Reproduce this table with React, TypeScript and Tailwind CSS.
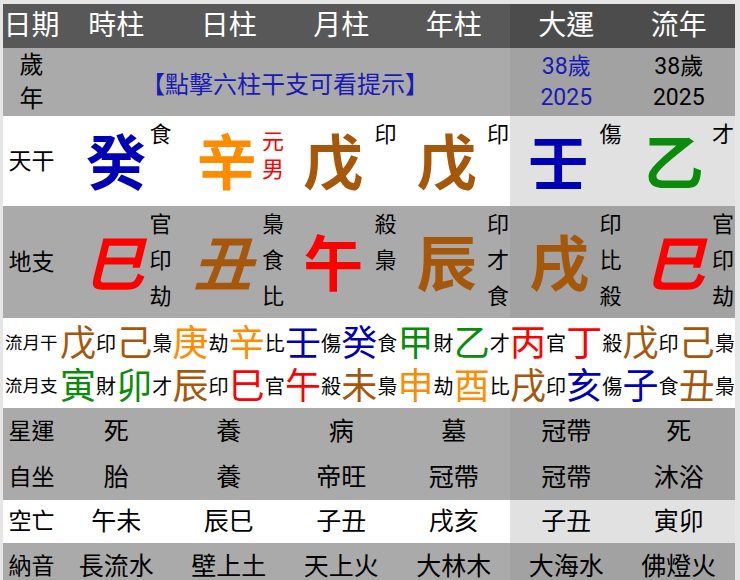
import React from "react";

const FONT = { fontFamily: 'Roboto, "Noto Sans CJK TC", "Noto Sans CJK SC", sans-serif' };

const BLUE = "text-[#0000b4]";
const ORANGE = "text-[#ff8c00]";
const BROWN = "text-[#a5580c]";
const RED = "text-[#ff0000]";
const GREEN = "text-[#0a8c0a]";

const GRID = "grid grid-cols-[57px_repeat(6,112.5px)]";

function Cell({ right, bgL, bgR, className = "", children }: { right?: boolean; bgL: string; bgR: string; className?: string; children?: React.ReactNode }) {
  return <div className={`${right ? bgR : bgL} ${className}`}>{children}</div>;
}

const stems = [
  { ch: "癸", c: BLUE, label: ["食"], s: "translate-x-0" },
  { ch: "辛", c: ORANGE, label: ["元", "男"], red: true, s: "-translate-x-[2px]" },
  { ch: "戊", c: BROWN, label: ["印"], s: "-translate-x-[8px]" },
  { ch: "戊", c: BROWN, label: ["印"], s: "-translate-x-[7px]" },
  { ch: "壬", c: BLUE, label: ["傷"], s: "-translate-x-[8px]" },
  { ch: "乙", c: GREEN, label: ["才"], s: "-translate-x-[5px]" },
];

const branches = [
  { ch: "巳", c: RED, label: ["官", "印", "劫"], s: "-translate-x-[2px] italic" },
  { ch: "丑", c: BROWN, label: ["梟", "食", "比"], s: "-translate-x-[6px] italic" },
  { ch: "午", c: RED, label: ["殺", "梟"], s: "-translate-x-[8px]" },
  { ch: "辰", c: BROWN, label: ["印", "才", "食"], s: "-translate-x-[7px]" },
  { ch: "戌", c: BROWN, label: ["印", "比", "殺"], s: "-translate-x-[7px]" },
  { ch: "巳", c: RED, label: ["官", "印", "劫"], s: "-translate-x-[4px] italic" },
];

const monthStems: [string, string, string][] = [
  ["戊", BROWN, "印"], ["己", BROWN, "梟"], ["庚", ORANGE, "劫"], ["辛", ORANGE, "比"],
  ["壬", BLUE, "傷"], ["癸", BLUE, "食"], ["甲", GREEN, "財"], ["乙", GREEN, "才"],
  ["丙", RED, "官"], ["丁", RED, "殺"], ["戊", BROWN, "印"], ["己", BROWN, "梟"],
];
const monthBranches: [string, string, string][] = [
  ["寅", GREEN, "財"], ["卯", GREEN, "才"], ["辰", BROWN, "印"], ["巳", RED, "官"],
  ["午", RED, "殺"], ["未", BROWN, "梟"], ["申", ORANGE, "劫"], ["酉", ORANGE, "比"],
  ["戌", BROWN, "印"], ["亥", BLUE, "傷"], ["子", BLUE, "食"], ["丑", BROWN, "梟"],
];

const lower = [
  { label: "星運", vals: ["死", "養", "病", "墓", "冠帶", "死"], bgL: "bg-[#aaaaaa]", bgR: "bg-[#a2a2a2]", h: "h-[47px]" },
  { label: "自坐", vals: ["胎", "養", "帝旺", "冠帶", "冠帶", "沐浴"], bgL: "bg-[#aaaaaa]", bgR: "bg-[#a2a2a2]", h: "h-[45px]" },
  { label: "空亡", vals: ["午未", "辰巳", "子丑", "戌亥", "子丑", "寅卯"], bgL: "bg-white", bgR: "bg-[#e1e1e1]", h: "h-[43px]" },
  { label: "納音", vals: ["長流水", "壁上土", "天上火", "大林木", "大海水", "佛燈火"], bgL: "bg-[#aaaaaa]", bgR: "bg-[#a2a2a2]", h: "h-[46px]" },
];

function MonthRow({ label, items }: { label: string; items: [string, string, string][] }) {
  return (
    <div className="grid grid-cols-[57px_repeat(12,56.25px)] h-[43px] items-center">
      <div className="text-[17.5px] leading-none pl-[2px] text-black whitespace-nowrap">{label}</div>
      {items.map(([ch, c, l], i) => (
        <div key={i} className="flex items-center">
          <span className={`text-[36px] leading-none ${c}`}>{ch}</span>
          <span className="text-[20px] leading-none text-black">{l}</span>
        </div>
      ))}
    </div>
  );
}

export default function App() {
  const headers = ["時柱", "日柱", "月柱", "年柱", "大運", "流年"];
  return (
    <div style={FONT} className="w-[740px] h-[580px] overflow-hidden bg-[#e6e6e6] pt-[4px] pl-[3px]">
      <div className="w-[732px]">
        {/* header */}
        <div className={`${GRID} h-[44px]`}>
          <div className="bg-[#585858] flex items-center justify-center text-[28px] leading-none text-white">日期</div>
          {headers.map((h, i) => (
            <Cell key={i} right={i >= 4} bgL="bg-[#585858]" bgR="bg-[#4c4c4c]" className="flex items-center justify-center text-[28px] leading-none text-white">
              {h}
            </Cell>
          ))}
        </div>

        {/* age row */}
        <div className={`${GRID} h-[68px]`}>
          <div className="bg-[#aaaaaa] flex flex-col items-center justify-center text-[24px] leading-[34px] text-black">
            <span>歲</span>
            <span>年</span>
          </div>
          <div className="col-span-4 bg-[#aaaaaa] flex items-center justify-center pt-[6px] text-[24px] leading-none text-[#1a1ab5]">
            【點擊六柱干支可看提示】
          </div>
          <div className="bg-[#a2a2a2] flex flex-col items-center justify-center text-[23px] leading-[31px] text-[#1a1ab5]">
            <span>38歲</span>
            <span>2025</span>
          </div>
          <div className="bg-[#a2a2a2] flex flex-col items-center justify-center text-[23px] leading-[31px] text-black">
            <span>38歲</span>
            <span>2025</span>
          </div>
        </div>

        {/* 天干 */}
        <div className={`${GRID} h-[90px]`}>
          <div className="bg-white flex items-center justify-center text-[23px] leading-none text-black">天干</div>
          {stems.map((s, i) => (
            <Cell key={i} right={i >= 4} bgL="bg-white" bgR="bg-[#e1e1e1]" className="relative flex items-center justify-center">
              <span className={`text-[60px] font-bold leading-none mt-[8px] ${s.c} ${s.s}`}>{s.ch}</span>
              {s.red ? (
                <div className="absolute right-[1px] top-[12px] flex flex-col text-[22px] leading-[28px] text-[#ff0000]">
                  {s.label.map((l, j) => <span key={j}>{l}</span>)}
                </div>
              ) : (
                <div className="absolute right-[1px] top-[1px] flex flex-col text-[22px] leading-[36px] text-black">
                  {s.label.map((l, j) => <span key={j}>{l}</span>)}
                </div>
              )}
            </Cell>
          ))}
        </div>

        {/* 地支 */}
        <div className={`${GRID} h-[112px]`}>
          <div className="bg-[#aaaaaa] flex items-center justify-center text-[23px] leading-none text-black">地支</div>
          {branches.map((s, i) => (
            <Cell key={i} right={i >= 4} bgL="bg-[#aaaaaa]" bgR="bg-[#a2a2a2]" className="relative flex items-center justify-center">
              <span className={`text-[60px] font-bold leading-none mt-[8px] ${s.c} ${s.s}`}>{s.ch}</span>
              <div className="absolute right-[1px] top-[1px] flex flex-col text-[22px] leading-[36px] text-black">
                {s.label.map((l, j) => <span key={j}>{l}</span>)}
              </div>
            </Cell>
          ))}
        </div>

        {/* 流月 */}
        <div className="bg-white h-[90px] pt-[4px]">
          <MonthRow label="流月干" items={monthStems} />
          <MonthRow label="流月支" items={monthBranches} />
        </div>

        {/* lower rows */}
        {lower.map((r, ri) => (
          <div key={ri} className={`${GRID} ${r.h}`}>
            <div className={`${r.bgL} flex items-center justify-center text-[23px] leading-none text-black`}>{r.label}</div>
            {r.vals.map((v, i) => (
              <Cell key={i} right={i >= 4} bgL={r.bgL} bgR={r.bgR} className="flex items-center justify-center text-[25px] leading-none text-black">
                {v}
              </Cell>
            ))}
          </div>
        ))}
      </div>
    </div>
  );
}
